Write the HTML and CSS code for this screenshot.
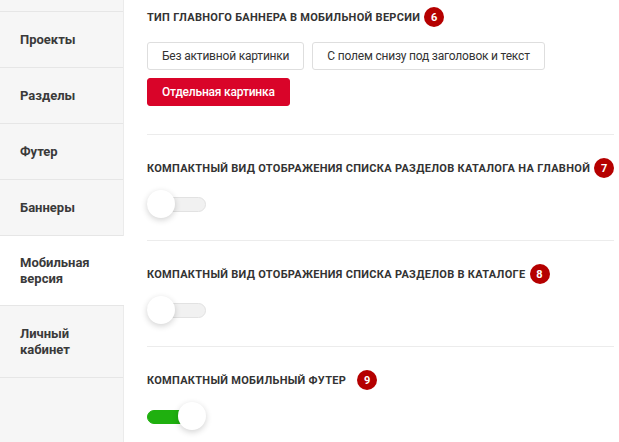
FILE: index.html
```html
<!DOCTYPE html>
<html lang="ru">
<head>
<meta charset="utf-8">
<link rel="stylesheet" href="styles.css">
</head>
<body>
<div class="layout">
  <nav class="sidebar">
    <div class="nav-item nav-top"></div>
    <div class="nav-item">Проекты</div>
    <div class="nav-item">Разделы</div>
    <div class="nav-item">Футер</div>
    <div class="nav-item">Баннеры</div>
    <div class="nav-item active">Мобильная<br>версия</div>
    <div class="nav-item">Личный<br>кабинет</div>
  </nav>
  <main class="content">
    <section class="section first">
      <div class="title">Тип главного баннера в мобильной версии <span class="badge">6</span></div>
      <div class="options">
        <button class="opt">Без активной картинки</button>
        <button class="opt">С полем снизу под заголовок и текст</button>
        <button class="opt selected">Отдельная картинка</button>
      </div>
    </section>
    <section class="section">
      <div class="title">Компактный вид отображения списка разделов каталога на главной <span class="badge">7</span></div>
      <div class="toggle"><span class="track"></span><span class="knob"></span></div>
    </section>
    <section class="section">
      <div class="title">Компактный вид отображения списка разделов в каталоге <span class="badge">8</span></div>
      <div class="toggle"><span class="track"></span><span class="knob"></span></div>
    </section>
    <section class="section last">
      <div class="title">Компактный мобильный футер <span class="badge wide">9</span></div>
      <div class="toggle on"><span class="track"></span><span class="knob"></span></div>
    </section>
  </main>
</div>
</body>
</html>
```
FILE: styles.css
```css
* { box-sizing: border-box; }
html, body { margin: 0; padding: 0; background: #fff; }
body { font-family: Roboto, "Liberation Sans", sans-serif; color: #333; }
.layout { display: flex; min-height: 442px; }
.sidebar {
  width: 124px;
  flex: 0 0 124px;
  background: #f6f6f6;
  border-right: 1px solid #ebebeb;
}
.nav-item {
  padding: 19.5px 20px;
  font-size: 13px;
  line-height: 16px;
  font-weight: 700;
  color: #3a3a3a;
  border-bottom: 1px solid #e6e6e6;
}
.nav-item.nav-top { height: 12px; padding: 0; }
.nav-item.active { background: #fff; margin-right: -1px; padding-top: 18.5px; padding-bottom: 18.5px; }
.content { flex: 1; padding: 0 16px 0 23px; }
.section { border-top: 1px solid #ececec; padding: 23px 0 22px; }
.section.first { border-top: 0; padding-top: 7px; padding-bottom: 28px; }
.title {
  display: flex;
  align-items: center;
  height: 20px;
  font-size: 11px;
  font-weight: 700;
  text-transform: uppercase;
  letter-spacing: 0.3px;
  color: #333;
  white-space: nowrap;
}
.badge {
  display: inline-flex;
  align-items: center;
  justify-content: center;
  width: 20px;
  height: 20px;
  margin-left: 4px;
  border-radius: 50%;
  background: #b50000;
  color: #fff;
  font-size: 11px;
  font-weight: 700;
  letter-spacing: 0;
}
.badge.wide { margin-left: 11px; }
.options { display: flex; flex-wrap: wrap; gap: 8px; margin-top: 15px; max-width: 410px; }
.opt {
  height: 28px;
  padding: 0 14px;
  border: 1px solid #dedede;
  border-radius: 3px;
  background: #fff;
  font-family: Roboto, "Liberation Sans", sans-serif;
  font-size: 12px;
  letter-spacing: -0.2px;
  color: #333;
}
.opt.selected { background: #d90429; border-color: #d90429; color: #fff; font-weight: 500; padding: 0 14px; }
.toggle { position: relative; width: 59px; height: 28px; margin-top: 12px; }
.track {
  position: absolute;
  left: 0; top: 7px;
  width: 59px; height: 15px;
  border-radius: 8px;
  background: #f1f1f1;
  border: 1px solid #e2e2e2;
}
.knob {
  position: absolute;
  left: 0; top: 0;
  width: 28px; height: 28px;
  border-radius: 50%;
  background: #fff;
  box-shadow: 0 2px 6px rgba(0,0,0,0.18);
}
.toggle.on .track { background: #1fb00f; border-color: #1fb00f; width: 52px; top: 8px; height: 14px; }
.toggle.on .knob { left: 31px; }
```
